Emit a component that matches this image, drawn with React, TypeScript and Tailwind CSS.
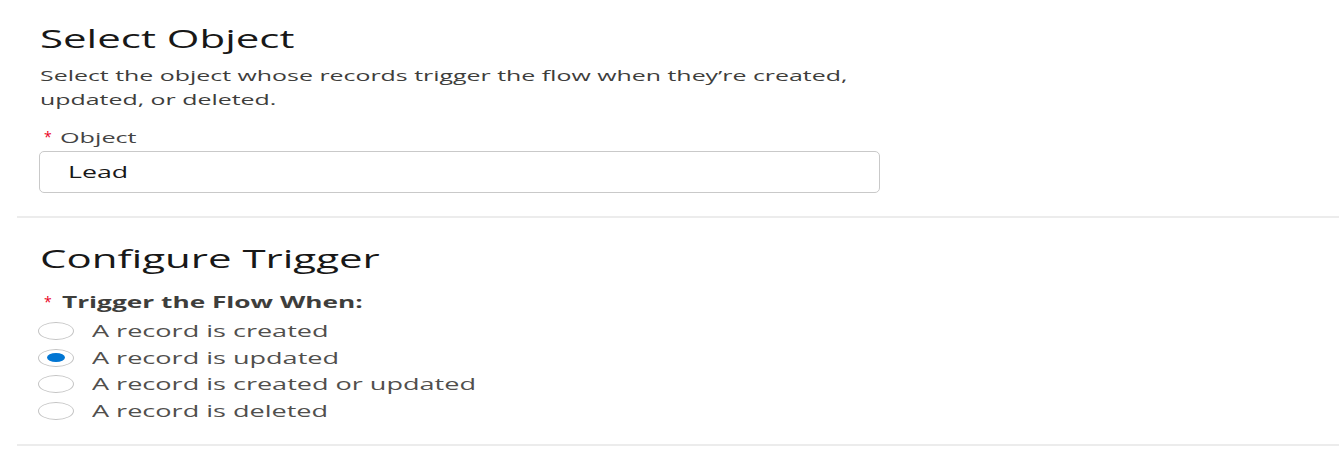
import React from "react";

const font = { fontFamily: '"Open Sans", "Noto Sans", sans-serif' };

function Radio({ checked, label }: { checked?: boolean; label: string }) {
  return (
    <div className="flex h-[26.5px] items-center">
      <div className="flex h-[18px] w-[36px] items-center justify-center rounded-[50%] border border-[#c4c4c4] bg-white">
        {checked && <div className="h-[9px] w-[18px] rounded-[50%] bg-[#0176d3]" />}
      </div>
      <span className="ml-[18px] block origin-left scale-x-[1.69] whitespace-nowrap text-[16px] leading-[20px] text-[#514f4d]">
        {label}
      </span>
    </div>
  );
}

export default function App() {
  return (
    <div className="min-h-[452px] w-[1339px] overflow-hidden bg-white pl-[17px]" style={font}>
      <div className="pl-[23px] pt-[22px]">
        <h2 className="block origin-left scale-x-[1.68] whitespace-nowrap text-[25px] leading-[32px] text-[#181818]">
          Select Object
        </h2>
        <p className="mt-[9px] block origin-left scale-x-[1.66] whitespace-nowrap text-[15px] leading-[24px] text-[#3e3e3c]">
          Select the object whose records trigger the flow when they’re created,
          <br />
          updated, or deleted.
        </p>
        <div className="mt-[16px] flex items-start">
          <span className="ml-[4px] mt-[3px] text-[14px] leading-[14px] text-[#ea001e]">*</span>
          <span className="ml-[8px] block origin-left scale-x-[1.68] whitespace-nowrap text-[15px] leading-[20px] text-[#444444]">
            Object
          </span>
        </div>
        <div className="mt-[4px] ml-[-1px] flex h-[42px] w-[841px] items-center rounded-[5px] border border-[#c9c9c9] bg-white pl-[28px]">
          <span className="block origin-left scale-x-[1.67] whitespace-nowrap text-[16px] leading-[20px] text-[#181818]">
            Lead
          </span>
        </div>
      </div>
      <div className="mt-[23px] h-[2px] bg-[#ececec]" />
      <div className="pl-[23px] pt-[24px]">
        <h2 className="block origin-left scale-x-[1.68] whitespace-nowrap text-[25px] leading-[32px] text-[#181818]">
          Configure Trigger
        </h2>
        <div className="mt-[18px] flex items-start">
          <span className="ml-[4px] mt-[3px] text-[14px] leading-[14px] text-[#ea001e]">*</span>
          <span className="ml-[10px] block origin-left scale-x-[1.64] whitespace-nowrap text-[16px] font-bold leading-[20px] text-[#3e3e3c]">
            Trigger the Flow When:
          </span>
        </div>
        <div className="mt-[6px] ml-[-2px] flex flex-col">
          <Radio label="A record is created" />
          <Radio checked label="A record is updated" />
          <Radio label="A record is created or updated" />
          <Radio label="A record is deleted" />
        </div>
      </div>
      <div className="mt-[20px] h-[2px] bg-[#ececec]" />
    </div>
  );
}
